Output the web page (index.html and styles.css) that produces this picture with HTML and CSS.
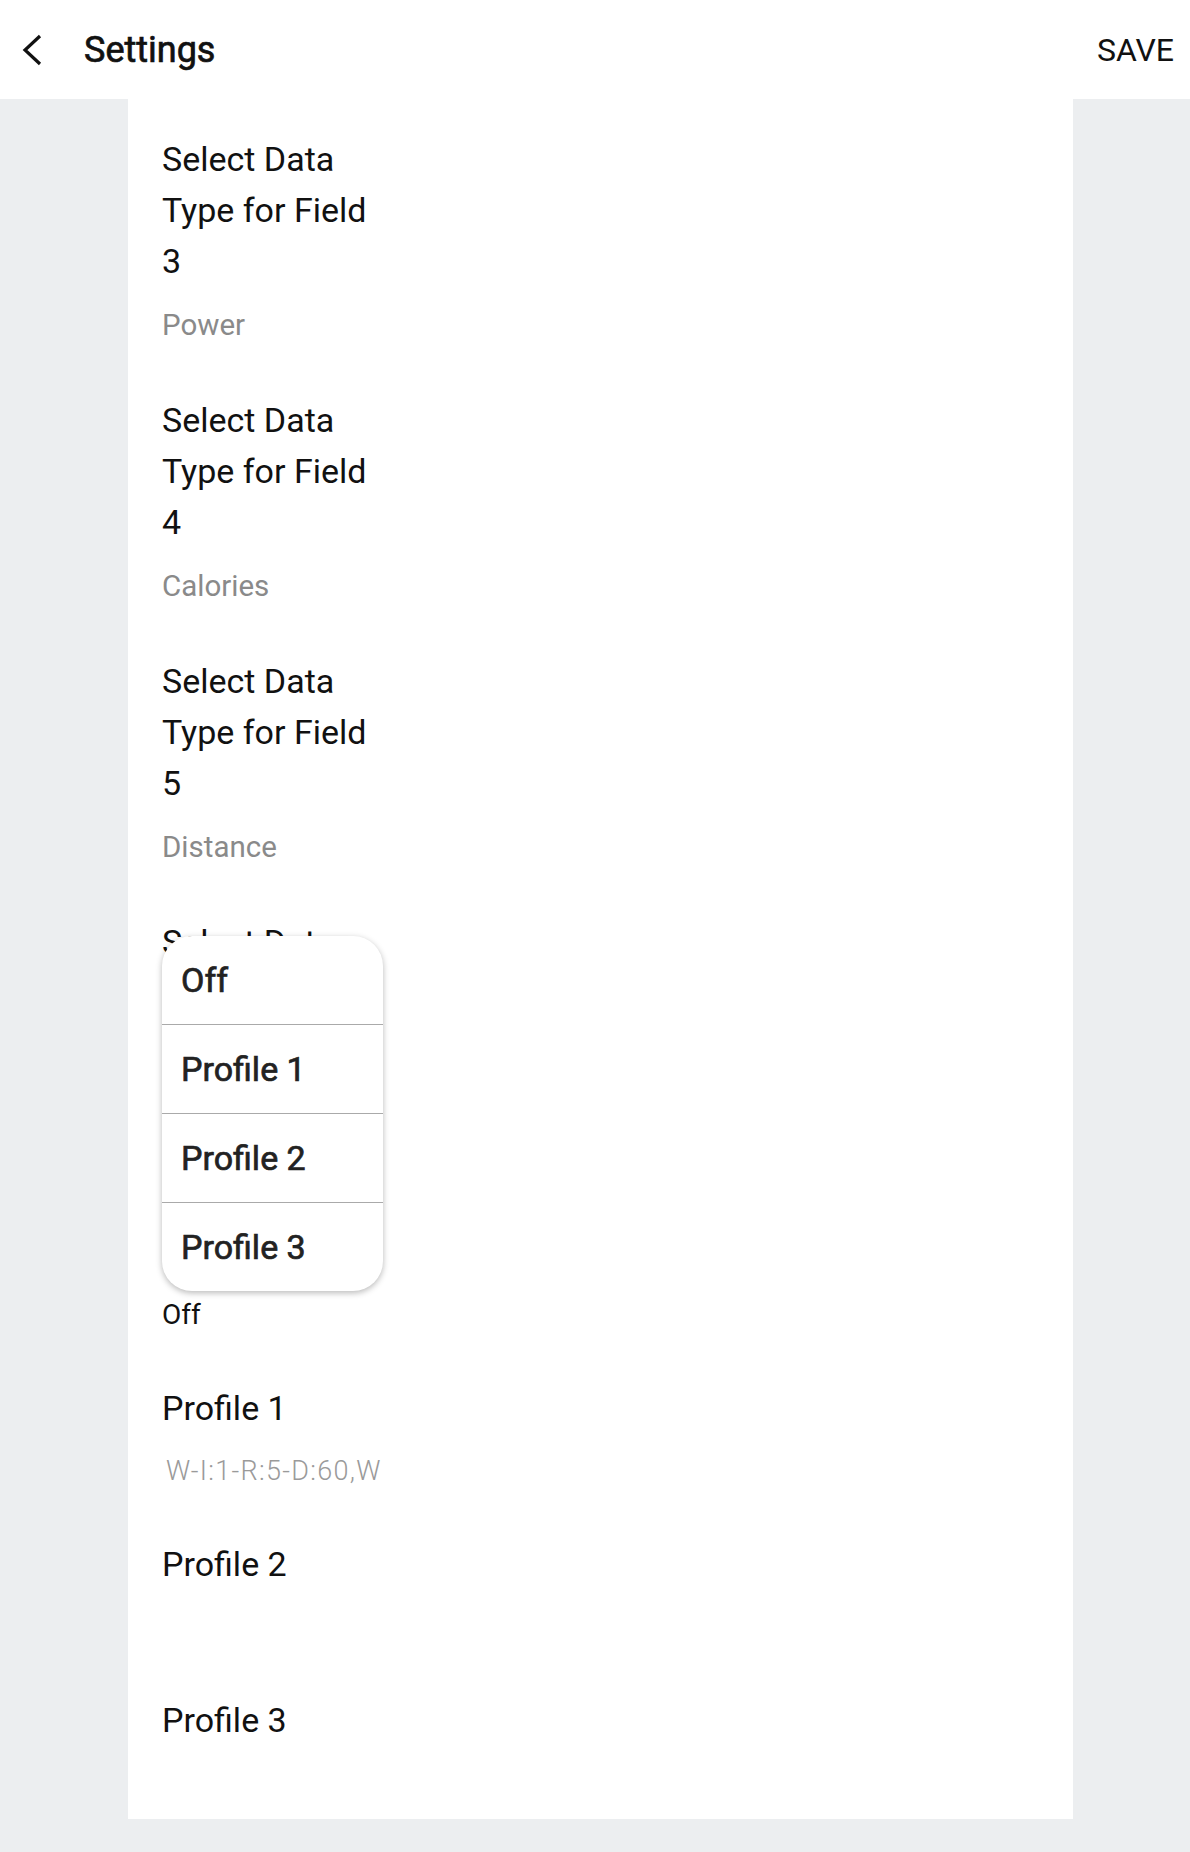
FILE: index.html
```html
<!DOCTYPE html>
<html lang="en">
<head>
    <meta charset="UTF-8">
    <meta name="viewport" content="width=device-width, initial-scale=1.0">
    <title>Settings</title>
    <link rel="stylesheet" href="styles.css">
</head>
<body>
    <header class="toolbar">
        <div class="toolbar-left">
            <svg class="back-icon" width="32" height="40" viewBox="0 0 32 40">
                <polyline points="24,6 9,20 24,34" fill="none" stroke="#111" stroke-width="3.2"/>
            </svg>
            <h1 class="toolbar-title">Settings</h1>
        </div>
        <span class="toolbar-action">SAVE</span>
    </header>

    <main class="page">
        <div class="pref-list">
            <div class="pref">
                <div class="pref-title">Select Data Type for Field 3</div>
                <div class="pref-summary">Power</div>
            </div>
            <div class="pref">
                <div class="pref-title">Select Data Type for Field 4</div>
                <div class="pref-summary">Calories</div>
            </div>
            <div class="pref">
                <div class="pref-title">Select Data Type for Field 5</div>
                <div class="pref-summary">Distance</div>
            </div>
            <div class="pref">
                <div class="pref-title">Select Data Type for Field 6</div>
                <div class="pref-summary">Speed</div>
            </div>
            <div class="pref compact">
                <div class="pref-title">Workout Profile</div>
                <div class="pref-summary dark">Off</div>
            </div>
            <div class="pref">
                <div class="pref-title">Profile 1</div>
                <div class="pref-summary light">W-I:1-R:5-D:60,W</div>
            </div>
            <div class="pref">
                <div class="pref-title">Profile 2</div>
                <div class="pref-summary empty"></div>
            </div>
            <div class="pref">
                <div class="pref-title">Profile 3</div>
                <div class="pref-summary empty"></div>
            </div>

            <!-- open dropdown for "Workout Profile" -->
            <ul class="dropdown">
                <li>Off</li>
                <li>Profile 1</li>
                <li>Profile 2</li>
                <li>Profile 3</li>
            </ul>
        </div>
    </main>
</body>
</html>
```

FILE: styles.css
```css
body {
    font-family: Roboto, "Liberation Sans", sans-serif;
    margin: 0;
    padding: 0;
    background-color: #eceef0;
    color: #111;
}

.toolbar {
    height: 99px;
    background-color: #fff;
    display: flex;
    justify-content: space-between;
    align-items: center;
    padding: 0 16px 0 16px;
    box-sizing: border-box;
}

.toolbar-left {
    display: flex;
    align-items: center;
}

.back-icon {
    display: block;
}

.toolbar-title {
    margin: 0 0 0 36px;
    font-size: 36px;
    font-weight: 400;
    -webkit-text-stroke: 0.7px #111;
    color: #111;
}

.toolbar-action {
    font-size: 32px;
    color: #111;
}

.page {
    height: 1753px;
    padding-left: 128px;
}

.pref-list {
    position: relative;
    width: 945px;
    height: 1720px;
    background-color: #fff;
    overflow: hidden;
    padding-top: 10px;
    box-sizing: border-box;
}

.pref {
    padding: 25px 34px;
}

.pref.compact {
    padding-bottom: 23px;
}

.pref-title {
    width: 220px;
    font-size: 34px;
    line-height: 51px;
    color: #111;
}

.pref-summary {
    margin-top: 18px;
    font-size: 29.5px;
    line-height: 40px;
    color: #8a8a8a;
}

.pref-summary.dark {
    margin-top: 15px;
    font-size: 28px;
    color: #111;
}

.pref-summary.light {
    margin-top: 20px;
    line-height: 35px;
    font-weight: 300;
    font-size: 27px;
    letter-spacing: 1.3px;
    padding-left: 4px;
    color: #9a9a9a;
}

.pref-summary.empty {
    height: 37px;
}

.dropdown {
    position: absolute;
    left: 34px;
    top: 837px;
    width: 221px;
    margin: 0;
    padding: 0;
    list-style: none;
    background-color: #fff;
    border-radius: 30px;
    box-shadow: 0 2px 6px rgba(0, 0, 0, 0.28);
    overflow: hidden;
}

.dropdown li {
    height: 88px;
    line-height: 88px;
    padding-left: 19px;
    font-size: 34px;
    font-weight: 400;
    -webkit-text-stroke: 0.7px #222;
    color: #222;
    border-top: 1px solid #aaa;
}

.dropdown li:first-child {
    border-top: none;
}
```
